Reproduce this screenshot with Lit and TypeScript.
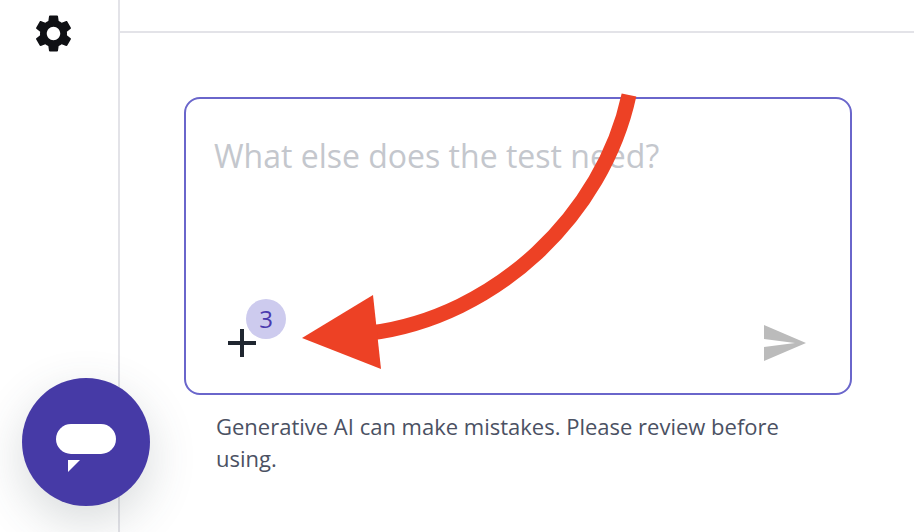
import { LitElement, html, css } from "lit";
import { customElement } from "lit/decorators.js";

@customElement("app-root")
export class AppRoot extends LitElement {
  static styles = css`
    :host {
      display: block;
      position: relative;
      width: 914px;
      height: 532px;
      overflow: hidden;
      background: #fff;
      font-family: "Open Sans", sans-serif;
    }
    .shell { display: flex; height: 100%; }
    .side {
      box-sizing: border-box;
      width: 120px;
      flex: none;
      border-right: 2px solid #e3e3e8;
      display: flex;
      justify-content: center;
      padding: 11px 12px 0 0;
    }
    .gear { width: 45px; height: 45px; display: block; color: #0f1014; }
    .main { flex: 1; min-width: 0; }
    .top { height: 31px; border-bottom: 2px solid #e3e3e8; }
    .body { padding: 64px 62px 0 64px; }
    .card {
      box-sizing: border-box;
      height: 298px;
      border: 2px solid #6a66cb;
      border-radius: 16px;
      padding: 33px 44px 32px 28px;
      display: flex;
      flex-direction: column;
      justify-content: space-between;
    }
    .ph { font-size: 32px; line-height: 48px; color: #c4c7cd; white-space: nowrap; }
    .row { display: flex; justify-content: space-between; align-items: center; padding-left: 14px; }
    .add { position: relative; width: 28px; height: 28px; display: block; }
    .plus { width: 28px; height: 28px; display: block; color: #1f2630; }
    .badge {
      position: absolute;
      left: 18px;
      top: -30px;
      width: 40px;
      height: 40px;
      border-radius: 50%;
      background: #cdcbee;
      color: #4a3aaf;
      font-size: 24px;
      font-weight: 500;
      line-height: 40px;
      text-align: center;
    }
    .send { width: 42px; height: 36px; display: block; color: #bbbbbb; }
    .note {
      margin: 15px 0 0 32px;
      font-size: 22px;
      line-height: 32px;
      color: #4b5163;
      width: 600px;
    }
    .arrow { position: absolute; left: 0; top: 0; width: 914px; height: 532px; pointer-events: none; }
    .fab {
      position: absolute;
      left: 22px;
      top: 378px;
      width: 128px;
      height: 128px;
      border-radius: 50%;
      background: #463aa6;
      box-shadow: 0 16px 48px rgba(60, 75, 80, 0.2);
    }
    .fab svg { display: block; width: 128px; height: 128px; }
  `;

  render() {
    return html`
      <div class="shell">
        <aside class="side">
          <svg class="gear" viewBox="0 0 24 24" fill="currentColor">
            <path d="M19.14 12.94c.04-.3.06-.61.06-.94 0-.32-.02-.64-.07-.94l2.03-1.58c.18-.14.23-.41.12-.61l-1.92-3.32c-.12-.22-.37-.29-.59-.22l-2.39.96c-.5-.38-1.03-.7-1.62-.94l-.36-2.54c-.04-.24-.24-.41-.48-.41h-3.84c-.24 0-.43.17-.47.41l-.36 2.54c-.59.24-1.13.57-1.62.94l-2.39-.96c-.22-.08-.47 0-.59.22L2.74 8.87c-.12.21-.08.47.12.61l2.03 1.58c-.05.3-.09.63-.09.94s.02.64.07.94l-2.03 1.58c-.18.14-.23.41-.12.61l1.92 3.32c.12.22.37.29.59.22l2.39-.96c.5.38 1.03.7 1.62.94l.36 2.54c.05.24.24.41.48.41h3.84c.24 0 .44-.17.47-.41l.36-2.54c.59-.24 1.13-.56 1.62-.94l2.39.96c.22.08.47 0 .59-.22l1.92-3.32c.12-.22.07-.47-.12-.61l-2.01-1.58zM12 15.6c-1.98 0-3.6-1.62-3.6-3.6s1.62-3.6 3.6-3.6 3.6 1.62 3.6 3.6-1.62 3.6-3.6 3.6z"/>
          </svg>
        </aside>
        <main class="main">
          <div class="top"></div>
          <div class="body">
            <div class="card">
              <div class="ph">What else does the test need?</div>
              <div class="row">
                <div class="add">
                  <svg class="plus" viewBox="0 0 28 28" fill="currentColor">
                    <rect x="12" y="0" width="4" height="28"/>
                    <rect x="0" y="12" width="28" height="4"/>
                  </svg>
                  <span class="badge">3</span>
                </div>
                <svg class="send" viewBox="0 0 42 36" fill="currentColor">
                  <path d="M0 0L42 18L0 36V22L31 18L0 14Z"/>
                </svg>
              </div>
            </div>
            <div class="note">Generative AI can make mistakes. Please review before using.</div>
          </div>
        </main>
      </div>
      <svg class="arrow" viewBox="0 0 914 532">
        <path d="M629 95C603 215 496 317 370 333" fill="none" stroke="#ed4125" stroke-width="15"/>
        <path d="M302 338L373 295L381 369Z" fill="#ed4125"/>
      </svg>
      <div class="fab">
        <svg viewBox="0 0 128 128">
          <rect x="34" y="46" width="60" height="30" rx="15" fill="#fff"/>
          <path d="M46 82H58L46 94Z" fill="#fff"/>
        </svg>
      </div>
    `;
  }
}
